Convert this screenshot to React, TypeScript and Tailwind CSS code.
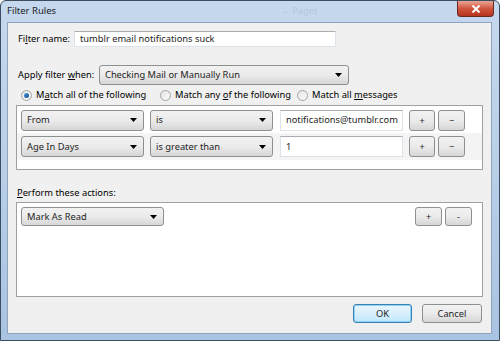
import React from 'react';

const font = "font-['Noto_Sans',sans-serif]";

function Arrow() {
  return (
    <svg width="7" height="4" viewBox="0 0 7 4" className="shrink-0">
      <path d="M0 0h7L3.5 4z" fill="#000" />
    </svg>
  );
}

function Dropdown({ label, w, h = 20 }: { label: string; w: number; h?: number }) {
  return (
    <div
      className="flex items-center justify-between rounded-[3px] border border-[#8e8f8f] bg-gradient-to-b from-[#f2f2f2] via-[#ebebeb] to-[#d6d6d6] pl-[5px] pr-[6px] text-[#1e1e1e] shrink-0"
      style={{ width: w, height: h }}
    >
      <span>{label}</span>
      <Arrow />
    </div>
  );
}

function SmallButton({ label, w = 26, h = 20 }: { label: string; w?: number; h?: number }) {
  return (
    <div
      className="flex items-center justify-center rounded-[3px] border border-[#8e8f8f] bg-gradient-to-b from-[#f2f2f2] via-[#ebebeb] to-[#d6d6d6] text-[9px] leading-none text-[#222] shrink-0"
      style={{ width: w, height: h }}
    >
      {label}
    </div>
  );
}

function TextBox({ value, w, h }: { value: string; w: number; h: number }) {
  return (
    <div
      className="flex items-center border border-[#dde3ea] border-t-[#abadb3] bg-white pl-[5px] text-[#1e1e1e] shrink-0"
      style={{ width: w, height: h }}
    >
      {value}
    </div>
  );
}

function Radio({ checked }: { checked?: boolean }) {
  return (
    <span className="flex h-[11px] w-[11px] items-center justify-center rounded-full border border-[#a3a3a3] bg-gradient-to-br from-[#e6e6e6] to-[#fafafa] shrink-0">
      {checked && <span className="h-[5px] w-[5px] rounded-full bg-gradient-to-br from-[#4a9be0] to-[#144d86]" />}
    </span>
  );
}

export default function App() {
  return (
    <div className={`${font} text-[9.3px] leading-none whitespace-nowrap w-[500px] h-[341px] relative overflow-hidden border border-[#3d4d60] rounded-t-[6px] bg-gradient-to-b from-[#c5d8ee] via-[#b9cfe8] to-[#a9c3e2]`}>
      {/* title bar */}
      <div className="flex h-[21px] items-start">
        <span className="pl-[6px] pt-[5px] text-[9.5px] text-[#1b1b1b]">Filter Rules</span>
        <span className="ml-[225px] pt-[5px] text-[9px] text-[#aab9cb] opacity-60 blur-[0.6px]">← Pages</span>
        <div className="ml-auto mr-[5px] flex h-[16px] w-[37px] items-center justify-center rounded-b-[4px] border border-t-0 border-[#6b2b22] bg-gradient-to-b from-[#e8a596] via-[#d0563e] to-[#b8321c]">
          <svg width="10" height="8" viewBox="0 0 10 8">
            <path d="M1.5 0.5L8.5 7.5M8.5 0.5L1.5 7.5" stroke="#fff" strokeWidth="2" />
          </svg>
        </div>
      </div>

      {/* client area */}
      <div className="ml-[6px] mr-[7px] h-[312px] border border-[#8fa4bd] bg-[#f0f0f0] flex flex-col">
        {/* filter name */}
        <div className="flex items-center mt-[8px] ml-[10px] h-[16px]">
          <span className="w-[56px]">
            Fi<span className="underline">l</span>ter name:
          </span>
          <TextBox value="tumblr email notifications suck" w={262} h={16} />
        </div>

        {/* apply filter when */}
        <div className="flex items-center mt-[18px] ml-[10px] h-[20px]">
          <span className="w-[81px]">
            Apply filter <span className="underline">w</span>hen:
          </span>
          <Dropdown label="Checking Mail or Manually Run" w={250} />
        </div>

        {/* match radios */}
        <div className="flex items-center mt-[4px] ml-[13px] h-[12px]">
          <Radio checked />
          <span className="ml-[4px] w-[124px]">
            M<span className="underline">a</span>tch all of the following
          </span>
          <Radio />
          <span className="ml-[4px] w-[122px]">
            Match any <span className="underline">o</span>f the following
          </span>
          <Radio />
          <span className="ml-[4px]">
            Match all <span className="underline">m</span>essages
          </span>
        </div>

        {/* rules list */}
        <div className="mt-[4px] ml-[8px] w-[467px] h-[65px] border border-[#a0a0a0] bg-white flex flex-col">
          <div className="flex items-center gap-[6px] pl-[4px] h-[27px] pt-[1px]">
            <Dropdown label="From" w={123} h={21} />
            <Dropdown label="is" w={123} h={21} />
            <div className="ml-[1px]">
              <TextBox value="notifications@tumblr.com" w={123} h={21} />
            </div>
            <SmallButton label="+" w={26} h={21} />
            <div className="-ml-[3px]">
              <SmallButton label="−" w={27} h={21} />
            </div>
          </div>
          <div className="flex items-center gap-[6px] pl-[4px] h-[27px] bg-[#f4f4f4]">
            <Dropdown label="Age In Days" w={123} h={21} />
            <Dropdown label="is greater than" w={123} h={21} />
            <div className="ml-[1px]">
              <TextBox value="1" w={123} h={21} />
            </div>
            <SmallButton label="+" w={26} h={21} />
            <div className="-ml-[3px]">
              <SmallButton label="−" w={27} h={21} />
            </div>
          </div>
        </div>

        {/* actions */}
        <div className="mt-[17px] ml-[9px] h-[12px] flex items-center">
          <span>
            <span className="underline">P</span>erform these actions:
          </span>
        </div>
        <div className="mt-[3px] ml-[8px] w-[467px] h-[95px] border border-[#a0a0a0] bg-white">
          <div className="flex items-center pt-[4px] pl-[4px] pr-[10px]">
            <Dropdown label="Mark As Read" w={143} h={19} />
            <div className="ml-auto flex gap-[3px]">
              <SmallButton label="+" w={27} h={19} />
              <SmallButton label="-" w={27} h={19} />
            </div>
          </div>
        </div>

        {/* dialog buttons */}
        <div className="flex justify-end gap-[10px] mt-[7px] mr-[9px]">
          <div className="flex h-[19px] w-[59px] items-center justify-center rounded-[3px] border border-[#3c7fb1] bg-gradient-to-b from-[#eaf6fd] via-[#d9f0fc] to-[#bee6fd] shadow-[inset_0_0_0_1px_#8fd3f8] text-[#1e1e1e]">
            OK
          </div>
          <div className="flex h-[19px] w-[60px] items-center justify-center rounded-[3px] border border-[#8e8f8f] bg-gradient-to-b from-[#f2f2f2] via-[#ebebeb] to-[#d6d6d6] text-[#1e1e1e]">
            Cancel
          </div>
        </div>
      </div>
    </div>
  );
}
